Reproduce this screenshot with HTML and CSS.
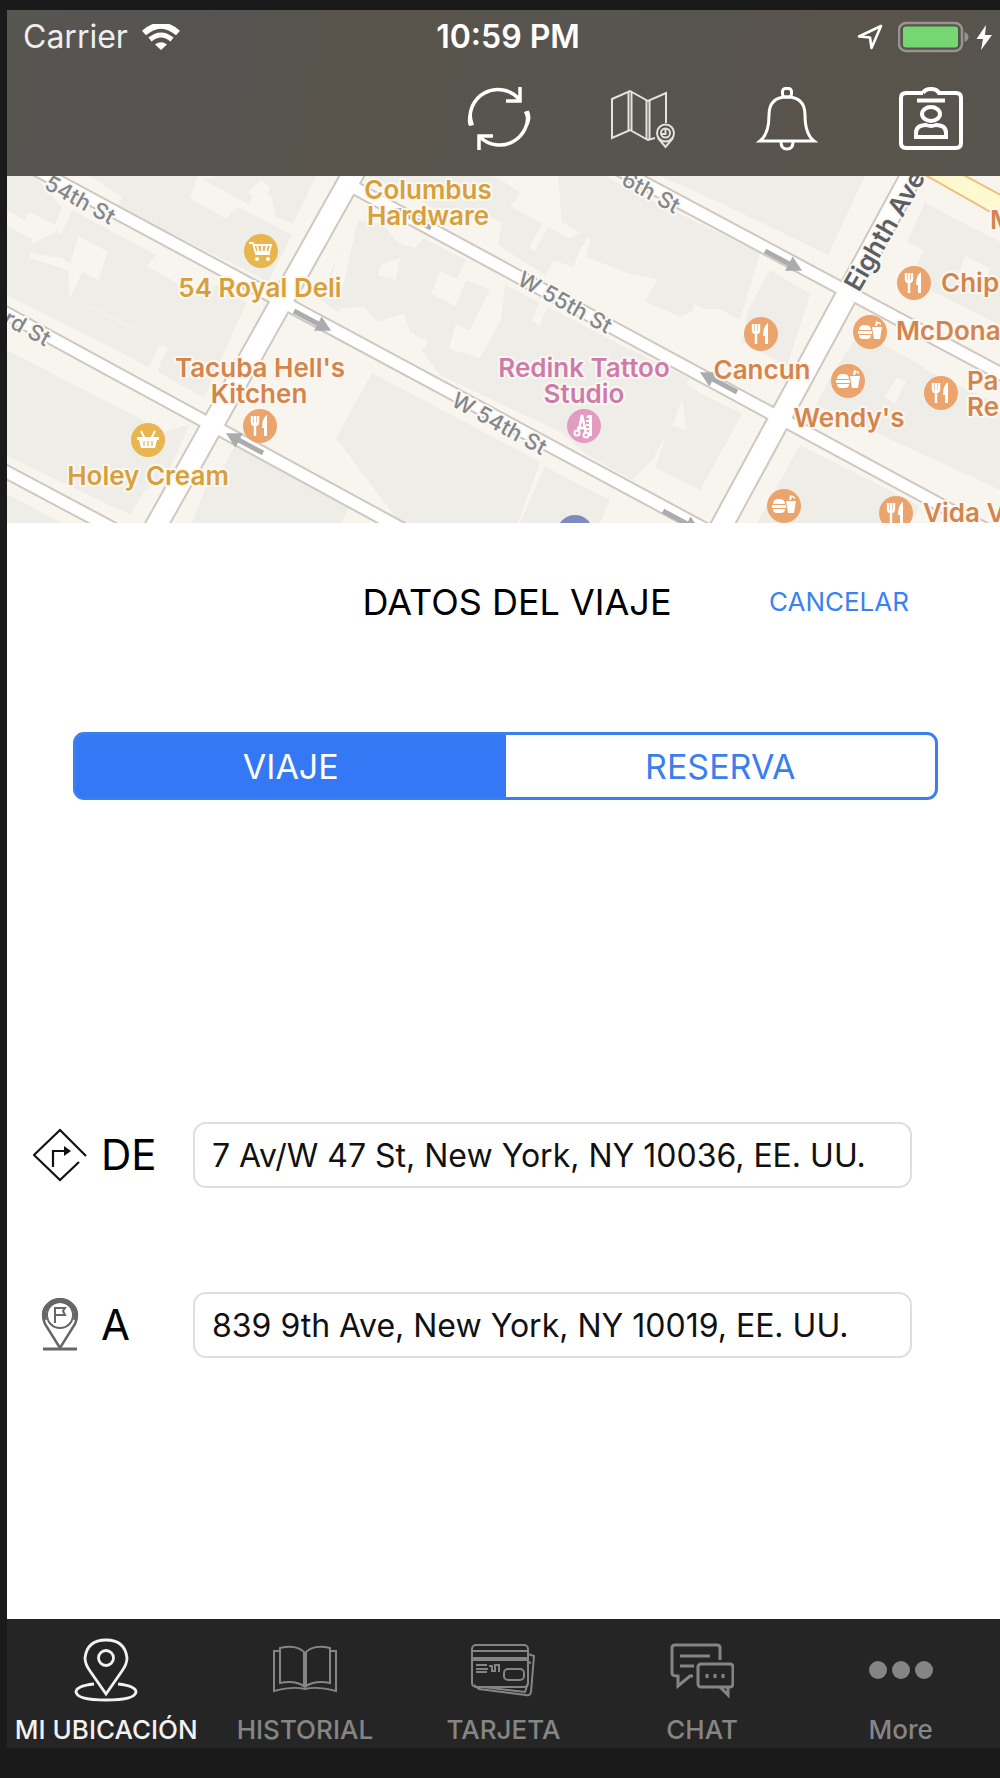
FILE: index.html
```html
<!DOCTYPE html>
<html lang="es">
<head>
<meta charset="utf-8">
<meta name="viewport" content="width=device-width, initial-scale=1">
<title>Datos del viaje</title>
<link rel="stylesheet" href="styles.css">
</head>
<body>
<div class="phone">
  <header class="header">
    <div class="status">
      <div class="status-left">
        <span>Carrier</span>
        <svg class="wifi" viewBox="0 0 38 26" aria-hidden="true"><path d="M2 9Q19-6 36 9" fill="none" stroke="#fff" stroke-width="6"/><path d="M8 15.500Q19 6.500 30 15.500" fill="none" stroke="#fff" stroke-width="5"/><path d="M13 20.500Q19 16 25 20.500L19 26Z" fill="#fff"/></svg>
      </div>
      <time class="clock">10:59 PM</time>
      <div class="status-right">
        <svg class="locate" viewBox="0 0 26 26" aria-hidden="true"><path d="M24 2L2 12.500L13 13.500L14.500 24Z" fill="none" stroke="#fff" stroke-width="2.600" stroke-linejoin="round"/></svg>
        <svg class="battery" viewBox="0 0 95 32" aria-hidden="true"><rect x="1" y="2" width="63" height="28" rx="7" fill="none" stroke="#98948f" stroke-width="2.500"/><rect x="5" y="5.500" width="55" height="21" rx="3" fill="#76d672"/><path d="M66.500 11v10q4-2 4-5t-4-5Z" fill="#98948f"/><path d="M88 4L78.500 18H85L83 29L94 14H87Z" fill="#fff"/></svg>
      </div>
    </div>
    <nav class="toolbar" aria-label="Acciones">
      <button class="tool" aria-label="Actualizar">
        <svg viewBox="0 0 64 64"><g fill="none" stroke="#fff" stroke-width="3.500"><path d="M4 38A28 28 0 0 1 52 12"/><path d="M60 24A28 28 0 0 1 13 50"/><path d="M53 0V14H39M12 63V49H26"/></g><path d="M1 36Q0 28 5 21Q4 30 7 38L2 39ZM57 25L62 24Q66 33 59 42Q61 33 57 25Z" fill="#fff"/></svg>
      </button>
      <button class="tool" aria-label="Mapa">
        <svg viewBox="0 0 64 64"><g fill="none" stroke="#e4e3e1" stroke-width="2"><path d="M44 51L37 53L19 43L1 51V12L19 4L37 14L55 6V36"/><path d="M17.500 5V43M20.500 5V43M35.500 13V52M38.500 13V52"/><circle cx="54.500" cy="46" r="8.500"/><circle cx="54.500" cy="46" r="4.500"/><path d="M54.500 42V47H51M47 51L54.500 60L62 51"/></g></svg>
      </button>
      <button class="tool" aria-label="Notificaciones">
        <svg viewBox="0 0 64 64"><g fill="none" stroke="#fff" stroke-width="3"><path d="M5 54Q14 47 14 28Q14 10 32 10T50 28Q50 47 59 54Z"/><rect x="27.500" y="1.500" width="9" height="8.500" rx="3"/><path d="M26 55Q26 62 32 62T38 55"/></g></svg>
      </button>
      <button class="tool" aria-label="Perfil">
        <svg viewBox="0 0 64 64"><g fill="none" stroke="#fff" stroke-width="4"><path d="M24 6H7Q2 6 2 11V56Q2 61 7 61H57Q62 61 62 56V11Q62 6 57 6H40Q38 2 32 2T24 6M18 13.500H46"/><ellipse cx="32" cy="27" rx="9" ry="7"/><path d="M17 50V46Q17 38 27 38Q32 40 37 38Q47 38 47 46V50Z"/></g></svg>
      </button>
    </nav>
  </header>

  <svg class="map" viewBox="7 176 993 347" preserveAspectRatio="xMidYMid slice" role="img" aria-label="Mapa de Nueva York">
    <defs>
      <g id="food"><circle r="17" fill="#eba56c"/><path d="M-8-10V-4Q-8-1-5-1V10M-5-10V-2M-2-10V-4Q-2-1-5-1" fill="none" stroke="#fff" stroke-width="2.400"/><path d="M7-11Q2-8 2 2H4V10H7Z" fill="#fff"/></g>
      <g id="burger"><circle r="17" fill="#eba56c"/><path d="M-11-2Q-11-7-5-7T1-2ZM-12-1H2V2H-12ZM-11 3H1Q1 7-3 7H-7Q-11 7-11 3ZM2-5H12L10 7H4ZM5-6L6-11L11-9V-7L8-9L7-6Z" fill="#fff"/></g>
      <path id="arrow" d="M0-2.500H27V-8L42 0L27 8V2.500H0Z" fill="#abacae"/>
    </defs>
    <rect x="7" y="176" width="993" height="347" fill="#f8f5ee"/>
    <g fill="#efede7">
      <path d="M7 176H35L62 208L55 225L30 212L24 220L7 210Z"/>
      <path d="M90 176H198L190 198L226 219L238 207L292 235L268 282L238 266L184 240L118 206L122 197Z"/>
      <path d="M218 176H316L293 224L276 217L271 195L255 192L248 204L204 180Z"/>
      <path d="M72 210L156 255L147 266L200 296L217 285L246 303L204 398L158 372L165 345L119 320L71 297L82 272L62 258L36 254L24 248L53 233L60 228Z"/>
      <path d="M7 226L32 239L30 258L68 270L70 297L164 344L153 370L120 352L7 295Z"/>
      <path d="M7 350L146 422L141 439L190 424L168 472L145 491L130 514L105 503L7 456Z"/>
      <path d="M7 494L62 523H7Z"/>
      <path d="M238 440L350 505L342 523H192L206 486L225 464Z"/>
      <path d="M350 233L336 262L330 280L350 290L338 312L318 298L346 240Z"/>
      <path d="M358 220L382 224L398 243L415 248L424 238L466 260L457 279L440 271L431 294L456 306L466 280L490 290L470 330L456 324L448 352L410 332L404 313L378 322L364 307L338 308Z"/>
      <path d="M366 176H495L521 193L510 206L568 238L588 231L577 269L554 260L545 275L498 245L502 223L482 213L459 226L426 204Z"/>
      <path d="M558 176H605L680 214L760 253L740 320L720 309L697 309L680 317L645 301L658 279L630 274L586 257L590 239L562 222Z"/>
      <path d="M505 285L631 350L689 378L674 422L652 460L632 480L586 454L560 432L440 375L422 351L428 342L480 358L501 320Z"/>
      <path d="M372 373L540 462L518 523H400L336 438Z"/>
      <path d="M545 466L570 480L610 500L600 523H520Z"/>
      <path d="M680 379L700 393L742 414L700 490L655 468L670 425L686 430Z"/>
      <path d="M660 176H865L828 255L723 204Z"/>
      <path d="M770 270L810 294L787 366L742 342L748 310Z"/>
      <path d="M925 203L1000 242V325L910 280L924 250L907 242Z"/>
      <path d="M860 332L912 360L930 372L1000 405V490L816 405L832 374Z"/>
      <path d="M800 445L920 506L910 523H757Z"/>
    </g>
    <g fill="#f8f5ee">
      <path d="M78 236L108 252L98 280L70 265ZM248 192L262 180L270 188L262 205ZM382 264L400 258L396 280L378 275ZM540 300L548 304L540 326L532 321ZM694 304L726 320L718 344L688 330ZM965 256L990 268L984 286L958 276ZM896 378L906 381L895 404L885 397Z"/>
      <path d="M545 218L551 222L535 251L529 248ZM582 245L588 247L578 270L573 268ZM160 345L168 348L155 372L147 370ZM69 208L73 209L61 234L57 232Z"/>
    </g>
    <g fill="none" stroke="#cec8c1">
      <g stroke-width="15"><path d="M-20 458L140 543"/><path d="M-20 299L450 555"/><path d="M0 150L740 548"/><path d="M340 180L1020 548"/><path d="M560 138L1020 384"/></g>
      <g stroke-width="24"><path d="M363 156L141 553"/><path d="M922 156L707 553"/></g>
    </g>
    <g fill="none" stroke="#fff">
      <g stroke-width="11"><path d="M-20 458L140 543"/><path d="M-20 299L450 555"/><path d="M0 150L740 548"/><path d="M340 180L1020 548"/><path d="M560 138L1020 384"/></g>
      <g stroke-width="20"><path d="M363 156L141 553"/><path d="M922 156L707 553"/></g>
    </g>
    <path d="M920 172L1010 223V200L958 172Z" fill="#fff9d2" stroke="#eec07d" stroke-width="2"/>
    <use href="#arrow" transform="translate(294 311) rotate(28)"/>
    <use href="#arrow" transform="translate(263 453) rotate(208)"/>
    <use href="#arrow" transform="translate(765 251) rotate(28)"/>
    <use href="#arrow" transform="translate(737 392) rotate(208)"/>
    <use href="#arrow" transform="translate(663 511) rotate(28)"/>
    <use href="#arrow" transform="translate(431 228) rotate(208)"/>
    <g class="street">
      <text transform="translate(43 188) rotate(29)">54th St</text>
      <text transform="translate(2 323) rotate(29)">rd St</text>
      <text transform="translate(516 284) rotate(29)">W 55th St</text>
      <text transform="translate(450 405) rotate(29)">W 54th St</text>
      <text transform="translate(620 184) rotate(29)">6th St</text>
    </g>
    <text class="avenue" transform="translate(859 293) rotate(-60)">Eighth Ave</text>
    <g class="place shop">
      <text x="428" y="199">Columbus</text><text x="428" y="225">Hardware</text>
      <text x="260" y="297">54 Royal Deli</text>
      <text x="148" y="485">Holey Cream</text>
    </g>
    <g class="place eat">
      <text x="260" y="377">Tacuba Hell's</text><text x="259" y="403">Kitchen</text>
      <text x="762" y="379">Cancun</text>
      <text x="849" y="427">Wendy's</text>
    </g>
    <g class="place eat from-start">
      <text x="990" y="229">M</text>
      <text x="941" y="292">Chip</text>
      <text x="896" y="340">McDona</text>
      <text x="967" y="390">Pa</text><text x="967" y="416">Re</text>
      <text x="923" y="522">Vida V</text>
    </g>
    <g class="place care"><text x="584" y="377">Redink Tattoo</text><text x="584" y="403">Studio</text></g>
    <g transform="translate(261 251)"><circle r="17" fill="#e9b54f"/><path d="M-12-8H-8L-5 3H9M-8-6H10L8 1H-6M-4-6L-2 2M1-6V2M6-6L4 2" fill="none" stroke="#fff" stroke-width="1.800"/><circle cx="-4" cy="8" r="2" fill="#fff"/><circle cx="7" cy="8" r="2" fill="#fff"/></g>
    <g transform="translate(148 440)"><circle r="17" fill="#e9b54f"/><path d="M-7-9L-3-1M7-9L3-1" stroke="#fff" stroke-width="2"/><path d="M-11-3H11V0H9L7 8H-7L-9 0H-11Z" fill="#fff"/><path d="M-4 1V6M0 1V6M4 1V6" stroke="#e9b54f" stroke-width="1.300"/></g>
    <use href="#food" x="260" y="426"/><use href="#food" x="761" y="334"/><use href="#food" x="914" y="283"/><use href="#food" x="941" y="393"/><use href="#food" x="896" y="513"/>
    <use href="#burger" x="870" y="332"/><use href="#burger" x="848" y="381"/><use href="#burger" x="784" y="506"/>
    <g transform="translate(584 426)"><circle r="17" fill="#e29cc2"/><path d="M-5 4L-2-11L2 7M-7 2H2" fill="none" stroke="#fff" stroke-width="2.500"/><circle cx="-7" cy="7" r="2.500" fill="none" stroke="#fff" stroke-width="2"/><circle cx="2" cy="9" r="2.500" fill="none" stroke="#fff" stroke-width="2"/><path d="M4-11H8V10H5V4H2V2H5V0H2V-2H5V-4H2V-6H5V-8H2Z" fill="#fff"/></g>
    <circle cx="575" cy="533" r="18" fill="#7e8bbd"/>
  </svg>

  <main class="panel">
    <div class="heading">
      <h1>DATOS DEL VIAJE</h1>
      <button class="cancel">CANCELAR</button>
    </div>
    <div class="segment" role="group" aria-label="Tipo de servicio">
      <button class="choice chosen" aria-pressed="true">VIAJE</button>
      <button class="choice" aria-pressed="false">RESERVA</button>
    </div>
    <form class="route">
      <div class="stop">
        <svg class="stop-icon" viewBox="0 0 54 54" aria-hidden="true"><g fill="none" stroke="#111" stroke-width="2.200"><path d="M53 28L27 2L1 27L27 52L46 34"/><path d="M20 39V23H33"/></g><path d="M31 18L38 23L31 28Z" fill="#111"/></svg>
        <label for="from">DE</label>
        <input id="from" type="text" value="7 Av/W 47 St, New York, NY 10036, EE. UU.">
      </div>
      <div class="stop">
        <svg class="stop-icon" viewBox="0 0 54 54" aria-hidden="true"><g fill="none" stroke="#666"><circle cx="27" cy="17" r="13" stroke-width="2"/><path d="M27 50L12 26Q7 14 15 6Q20 1 27 1T39 6Q47 14 42 26Z" stroke-width="2.500"/><path d="M12 22Q9 12 16 7Q20 3 27 3T38 7Q45 12 42 22" stroke-width="4"/><path d="M22 25V10H32L30 13L32 17H22" stroke-width="2"/><path d="M10 51H44" stroke-width="3"/></g></svg>
        <label for="to">A</label>
        <input id="to" type="text" value="839 9th Ave, New York, NY 10019, EE. UU.">
      </div>
    </form>
  </main>

  <nav class="tabs" aria-label="Principal">
    <a class="tab current" href="#ubicacion" aria-current="page">
      <svg viewBox="0 0 64 64" aria-hidden="true"><g fill="none" stroke="currentColor" stroke-width="2.800"><path d="M32 56L16 33Q11 26 11 20Q13 2 32 2T53 20Q53 26 48 33Z"/><circle cx="32" cy="20" r="7.500"/><path d="M20 46Q2 48 2 54Q3 62 32 62T62 54Q62 48 44 46"/></g></svg>
      <span>MI UBICACIÓN</span>
    </a>
    <a class="tab" href="#historial">
      <svg viewBox="0 0 64 64" aria-hidden="true"><g fill="none" stroke="currentColor" stroke-width="2"><path d="M32 15Q24 6 7 10V45Q23 42 32 49Q41 42 57 45V10Q40 6 32 15V49M31 15V48M33 15V48"/><path d="M7 13H1V53Q20 48 32 51Q44 48 63 53V13H57"/></g></svg>
      <span>HISTORIAL</span>
    </a>
    <a class="tab" href="#tarjeta">
      <svg viewBox="0 0 64 64" aria-hidden="true"><g fill="none" stroke="currentColor" stroke-width="2"><rect x="1" y="7" width="56" height="42" rx="4"/><path d="M1 13H56M1 20H57M1 22H57M57 16L63 18L60 54Q59 58 55 57L8 51L3 47M57 24L60 25M57 45L54 54L12 49"/><rect x="33" y="31" width="20" height="11" rx="4"/><path d="M5 27H16M5 31H17M5 34H16M18 28H21V33H24V27H28V34"/></g></svg>
      <span>TARJETA</span>
    </a>
    <a class="tab" href="#chat">
      <svg viewBox="0 0 64 64" aria-hidden="true"><g fill="none" stroke="currentColor" stroke-width="3"><path d="M50 22V10Q50 7 47 7H5Q2 7 2 10V35Q2 38 8 38V48L20 38H23"/><rect x="28" y="26" width="35" height="23" rx="3"/><path d="M10 18H40M10 28H24M50 49L58 57V49M37 36V40M45 36V40M53 36V40"/></g></svg>
      <span>CHAT</span>
    </a>
    <a class="tab" href="#more">
      <svg viewBox="0 0 64 64" aria-hidden="true"><g fill="currentColor"><circle cx="9" cy="32" r="9"/><circle cx="32" cy="32" r="9"/><circle cx="55" cy="32" r="9"/></g></svg>
      <span>More</span>
    </a>
  </nav>
</div>
</body>
</html>
```
FILE: styles.css
```css
* { box-sizing: border-box; }

body {
  margin: 0;
  background: #1a1a1a;
  font-family: Inter, "Liberation Sans", sans-serif;
  color: #000;
}

button {
  margin: 0;
  padding: 0;
  border: 0;
  background: none;
  font: inherit;
  color: inherit;
}

svg { display: block; }

.phone {
  display: flex;
  flex-direction: column;
  min-height: 100vh;
  padding: 10px 0 30px 7px;
  overflow: hidden;
}

.header {
  padding-bottom: 25px;
  background: linear-gradient(100deg, #575550 0%, #565450 25%, #59544b 35%, #565550 60%, #59534c 80%, #59544b 88%, #57544f 100%);
}

.status {
  display: grid;
  grid-template-columns: 1fr auto 1fr;
  align-items: center;
  height: 53px;
  padding: 0 7px 0 16px;
  font-size: 32px;
  line-height: 36px;
  color: #fff;
}

.status-left,
.status-right {
  display: flex;
  align-items: center;
}

.status-left { gap: 14px; color: #efeeed; }
.status-right { justify-content: flex-end; gap: 15px; }
.clock { font-weight: 600; }
.wifi { width: 38px; height: 26px; }
.locate { width: 26px; height: 26px; }
.battery { width: 95px; height: 32px; }

.toolbar {
  display: flex;
  justify-content: flex-end;
  gap: 80px;
  margin-top: 24px;
  padding-right: 37px;
}

.tool,
.tool svg { width: 64px; height: 64px; }

.map { width: 100%; height: 347px; }

.map text {
  paint-order: stroke;
  stroke: #faf8f3;
  stroke-width: 4px;
  stroke-linejoin: round;
}

.street { font-size: 22px; font-weight: 500; fill: #83868a; }
.avenue { font-size: 26px; font-weight: 600; fill: #5b5e63; }
.place { font-size: 26px; font-weight: 600; text-anchor: middle; }
.from-start { text-anchor: start; }
.shop { fill: #d7a03c; }
.eat { fill: #d5854b; }
.care { fill: #cf7ba9; }

.panel {
  flex: 1;
  padding-top: 57px;
  background: #fff;
}

.heading {
  display: grid;
  grid-template-columns: 1fr auto 1fr;
  align-items: center;
  padding: 0 91px 0 118px;
}

.heading h1 {
  grid-column: 2;
  margin: 0;
  font-size: 36px;
  font-weight: 400;
  line-height: 44px;
}

.cancel {
  justify-self: end;
  font-size: 26px;
  line-height: 44px;
  color: #3a81f2;
}

.segment {
  display: grid;
  grid-template-columns: 1fr 1fr;
  height: 68px;
  margin: 108px 62px 0 66px;
  border: 3px solid #3a7ff0;
  border-radius: 11px;
  background: linear-gradient(90deg, #3478f6 50%, #fff 50%);
  overflow: hidden;
}

.choice { font-size: 34px; color: #3a7ff0; }
.chosen { background: #3478f6; color: #fff; }

.route {
  display: flex;
  flex-direction: column;
  gap: 104px;
  padding: 322px 88px 104px 26px;
}

.stop {
  display: grid;
  grid-template-columns: 54px 76px 1fr;
  align-items: center;
  column-gap: 14px;
}

.stop > input { margin-left: 2px; }

.stop-icon { width: 54px; height: 54px; }
.stop label { font-size: 42px; line-height: 48px; }

.stop input {
  height: 66px;
  min-width: 0;
  padding: 0 17px;
  border: 2px solid #dedede;
  border-radius: 13px;
  background: #fff;
  font: inherit;
  font-size: 32px;
  color: #111;
}

.tabs {
  display: grid;
  grid-template-columns: repeat(5, 1fr);
  height: 129px;
  padding-top: 19px;
  background: #252525;
}

.tab {
  display: flex;
  flex-direction: column;
  align-items: center;
  gap: 12px;
  font-size: 26px;
  font-weight: 500;
  line-height: 32px;
  text-decoration: none;
  white-space: nowrap;
  color: #858585;
}

.tab svg { width: 64px; height: 64px; }
.current { color: #f2f2f2; }
```
